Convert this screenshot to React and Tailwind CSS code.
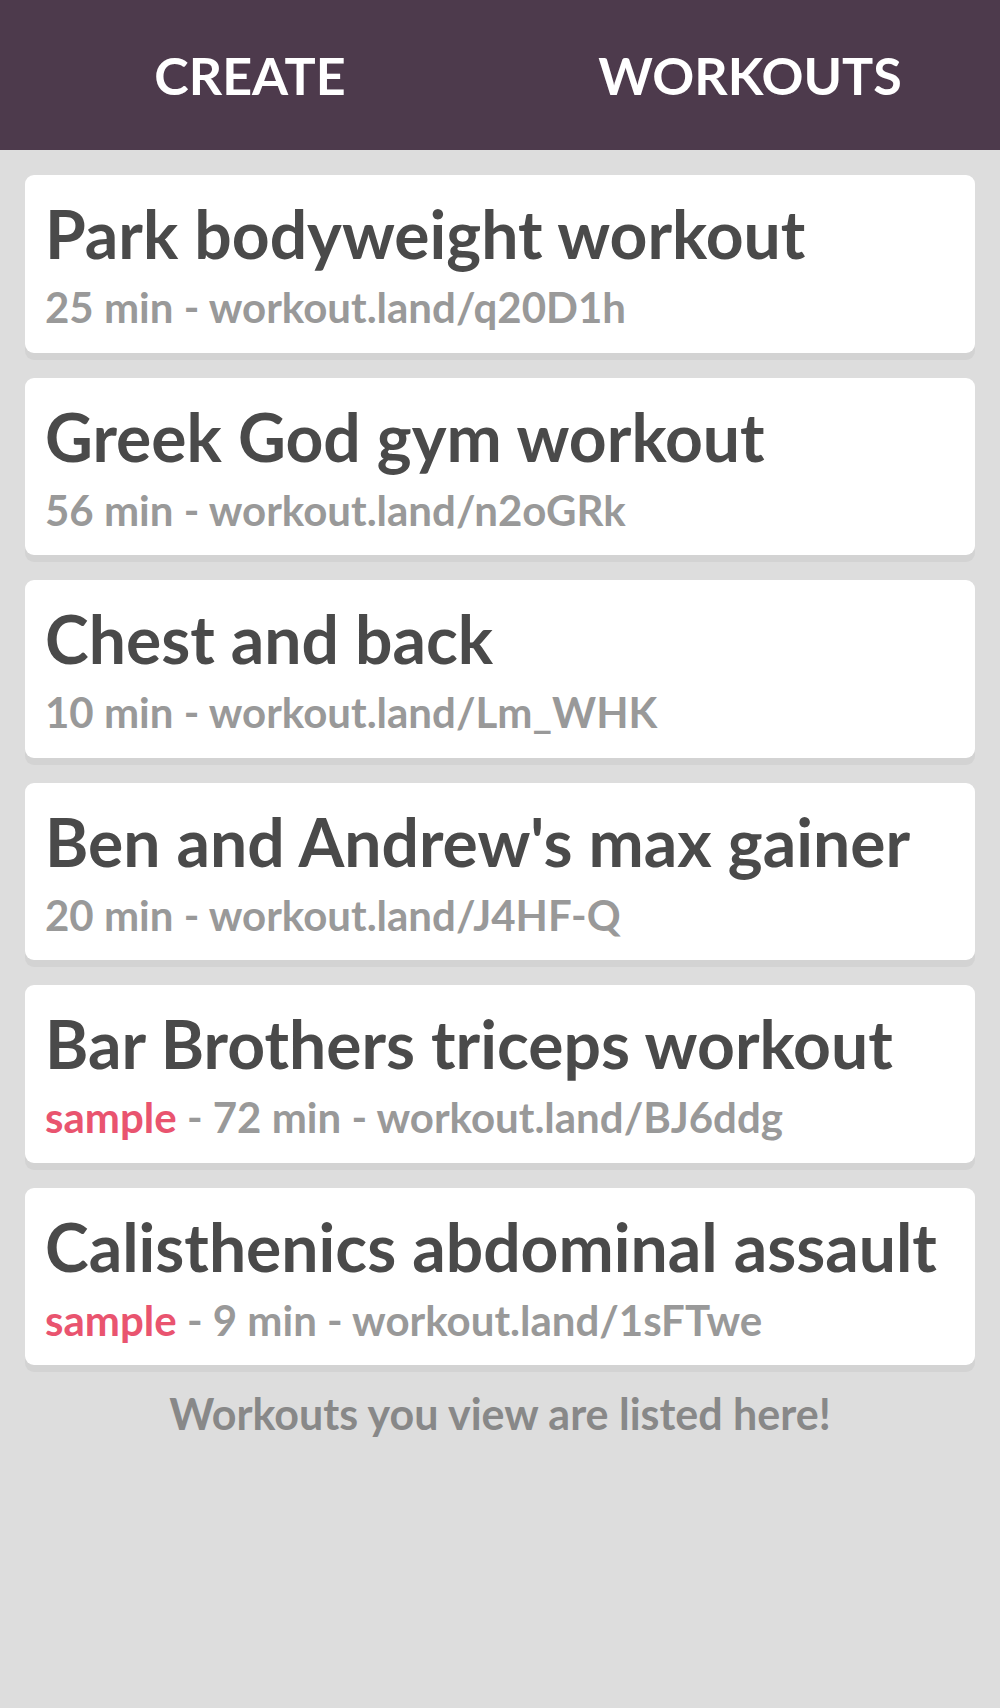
import React from "react";

const workouts = [
  { id: 1, name: "Park bodyweight workout", time: "25 min", link: "workout.land/q20D1h" },
  { id: 2, name: "Greek God gym workout", time: "56 min", link: "workout.land/n2oGRk" },
  { id: 3, name: "Chest and back", time: "10 min", link: "workout.land/Lm_WHK" },
  { id: 4, name: "Ben and Andrew's max gainer", time: "20 min", link: "workout.land/J4HF-Q" },
  { id: 5, name: "Bar Brothers triceps workout", time: "72 min", link: "workout.land/BJ6ddg", sample: true },
  { id: 6, name: "Calisthenics abdominal assault", time: "9 min", link: "workout.land/1sFTwe", sample: true },
];

export default function App() {
  return (
    <div className="min-h-[1708px] bg-[#dddddd] font-['Lato','Noto_Sans',sans-serif] font-bold">
      {/* Top tabs */}
      <div className="h-[150px] bg-[#4d3a4c] flex items-center text-white text-[52px] leading-none">
        <div className="flex-1 text-center">CREATE</div>
        <div className="flex-1 text-center">WORKOUTS</div>
      </div>

      {/* Workout list */}
      <div className="px-[25px] pt-[25px] flex flex-col gap-[25px]">
        {workouts.map((w) => (
          <div
            key={w.id}
            className="bg-white rounded-[9px] shadow-[0_7px_0_#d3d3d3] px-5 pt-[19px] pb-[20.5px]"
          >
            <h3 className="text-[66px] leading-[79px] text-[#4a4a4a] whitespace-nowrap">{w.name}</h3>
            <p className="mt-[9px] text-[42px] leading-[50px] text-[#999999] whitespace-nowrap">
              {w.sample && <span className="text-[#e9546f]">sample</span>}
              {w.sample && " - "}
              {w.time} - {w.link}
            </p>
          </div>
        ))}
      </div>

      <p className="mt-[23px] text-center text-[43px] leading-[52px] text-[#888888]">
        Workouts you view are listed here!
      </p>
    </div>
  );
}
